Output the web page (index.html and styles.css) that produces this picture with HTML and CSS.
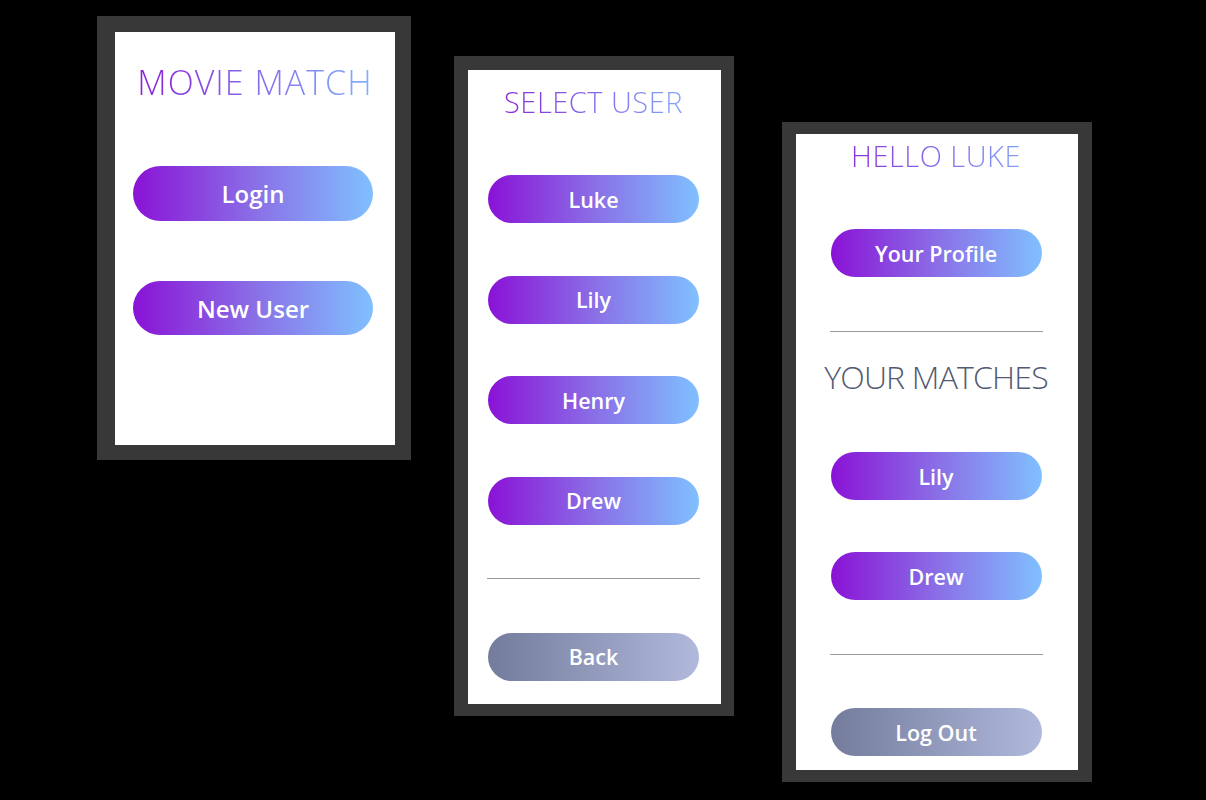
FILE: index.html
```html
<!DOCTYPE html>
<html lang="en">
<head>
<meta charset="utf-8">
<title>Movie Match</title>
<link rel="stylesheet" href="styles.css">
</head>
<body>
<main class="board">
  <section class="phone phone-start">
    <div class="screen screen-start">
      <h1 class="title title-lg">MOVIE MATCH</h1>
      <button class="pill pill-lg pill-first">Login</button>
      <button class="pill pill-lg pill-second">New User</button>
    </div>
  </section>

  <section class="phone phone-select">
    <div class="screen screen-select">
      <h1 class="title title-md">SELECT USER</h1>
      <div class="list">
        <button class="pill">Luke</button>
        <button class="pill">Lily</button>
        <button class="pill">Henry</button>
        <button class="pill">Drew</button>
      </div>
      <hr class="rule">
      <button class="pill pill-muted">Back</button>
    </div>
  </section>

  <section class="phone phone-home">
    <div class="screen screen-home">
      <h1 class="title title-md">HELLO LUKE</h1>
      <button class="pill pill-profile">Your Profile</button>
      <hr class="rule">
      <h2 class="subtitle">YOUR MATCHES</h2>
      <div class="list list-matches">
        <button class="pill">Lily</button>
        <button class="pill">Drew</button>
      </div>
      <hr class="rule">
      <button class="pill pill-muted">Log Out</button>
    </div>
  </section>
</main>
</body>
</html>
```

FILE: styles.css
```css
* { box-sizing: border-box; }

html, body {
  margin: 0;
  padding: 0;
  background: #000;
  width: 1206px;
  height: 800px;
  overflow: hidden;
}

.board {
  display: flex;
  align-items: flex-start;
  padding-left: 97px;
  font-family: "Open Sans", "Noto Sans", sans-serif;
}

.phone {
  background: #383838;
  display: flex;
}

.phone-start {
  margin-top: 16px;
  padding: 16px 16px 15px 18px;
}

.phone-select {
  margin-top: 56px;
  margin-left: 43px;
  padding: 14px 13px 12px 14px;
}

.phone-home {
  margin-top: 122px;
  margin-left: 48px;
  padding: 12px 14px 12px 14px;
}

.screen {
  background: #fff;
  display: flex;
  flex-direction: column;
  align-items: center;
}

.screen-start {
  width: 280px;
  height: 413px;
  padding-top: 30px;
}

.screen-select {
  width: 253px;
  height: 634px;
  padding: 14px 2px 0 0;
}

.screen-home {
  width: 282px;
  height: 636px;
  padding: 4px 2px 0 0;
}

.title {
  margin: 0;
  width: 100%;
  text-align: center;
  font-weight: 300;
  background: linear-gradient(90deg, #8a12d6 0%, #80c0ff 100%);
  -webkit-background-clip: text;
  background-clip: text;
  color: transparent;
  white-space: nowrap;
}

.title-lg {
  font-size: 34px;
  line-height: 40px;
  letter-spacing: 1px;
}

.title-md {
  font-size: 29px;
  line-height: 36px;
  letter-spacing: 0.5px;
}

.subtitle {
  margin: 25px 0 0;
  font-size: 32px;
  line-height: 40px;
  font-weight: 300;
  color: #535a72;
  letter-spacing: -0.8px;
  white-space: nowrap;
}

.pill {
  display: flex;
  align-items: center;
  justify-content: center;
  width: 211px;
  height: 48px;
  border: 0;
  border-radius: 24px;
  padding: 0;
  background: linear-gradient(90deg, #8a12d6 0%, #8a6ee6 50%, #80c0ff 100%);
  color: #fff;
  font-family: "Open Sans", "Noto Sans", sans-serif;
  font-size: 21.5px;
  font-weight: 600;
  letter-spacing: 0;
}

.pill-lg {
  width: 240px;
  height: 55px;
  border-radius: 28px;
  font-size: 24px;
  margin-left: -4px;
}

.pill-first { margin-top: 64px; }
.pill-second { margin-top: 60px; height: 54px; }

.pill-muted {
  background: linear-gradient(90deg, #747c9c 0%, #b0b8dc 100%);
}

.list {
  display: flex;
  flex-direction: column;
  gap: 52.67px;
  margin-top: 55px;
}

.list-matches { margin-top: 55px; gap: 52px; }

.pill-profile { margin-top: 55px; }

.rule {
  width: 213px;
  height: 1px;
  border: 0;
  background: #9a9a9a;
  margin: 53.5px 0 53.5px;
}

.screen-home .rule { margin: 54px 0 0; }
.screen-home .rule + .pill-muted { margin-top: 53px; }
```
